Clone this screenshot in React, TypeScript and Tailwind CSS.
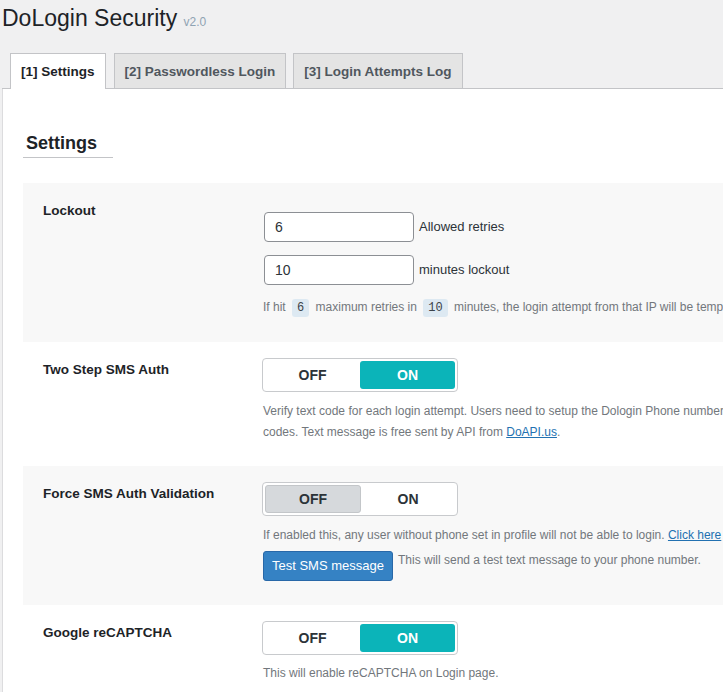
import React from "react";

const FONT = { fontFamily: '"Liberation Sans", Arial, sans-serif' };

function Toggle({ on }: { on: boolean }) {
  return (
    <div className="flex h-[34px] w-[196px] rounded-[4px] border border-[#c8cacd] bg-white p-[2px]">
      <div
        className={
          "flex flex-1 items-center justify-center rounded-[3px] text-[14px] font-semibold text-[#2c3338] " +
          (on ? "" : "border border-[#c3c6c9] bg-[#d6d9dc]")
        }
      >
        OFF
      </div>
      <div
        className={
          "flex flex-1 items-center justify-center rounded-[3px] text-[14px] font-semibold " +
          (on ? "bg-[#0bb4b9] text-white" : "text-[#2c3338]")
        }
      >
        ON
      </div>
    </div>
  );
}

function Code({ children }: { children: React.ReactNode }) {
  return (
    <code className="mx-[3px] rounded-[3px] bg-[#dde9f2] px-[5px] py-[2px] font-['Liberation_Mono',monospace] text-[12px] text-[#3c434a]">
      {children}
    </code>
  );
}

function Row({
  label,
  shaded,
  top,
  bottom,
  children,
}: {
  label: string;
  shaded?: boolean;
  top: string;
  bottom: string;
  children: React.ReactNode;
}) {
  return (
    <div className={"flex pl-[20px] " + (shaded ? "bg-[#f8f8f8]" : "bg-white") + " " + bottom}>
      <div className="w-[219px] shrink-0 pt-[18px] text-[13.5px] font-semibold leading-[20px] text-[#1d2327]">
        {label}
      </div>
      <div className={"flex flex-col " + top}>{children}</div>
    </div>
  );
}

export default function App() {
  return (
    <div className="h-[692px] w-[723px] overflow-hidden bg-[#f0f0f1] pl-[2px]" style={FONT}>
      <h1 className="pt-[2px] text-[23px] leading-[32px] text-[#1d2327]">
        DoLogin Security <span className="text-[12px] text-[#8fa3b3]">v2.0</span>
      </h1>

      <div className="mt-[15px] flex items-end border-b border-[#c3c4c7] pl-[8px]">
        <div className="-mb-px h-[36px] border border-b-0 border-[#c3c4c7] bg-white px-[10px] pt-[8px] text-[13.5px] font-semibold text-[#1d2327]">
          [1] Settings
        </div>
        <div className="ml-[8px] h-[35px] border border-b-0 border-[#c3c4c7] bg-[#e4e4e4] px-[10px] pt-[8px] text-[13.5px] font-semibold text-[#50575e]">
          [2] Passwordless Login
        </div>
        <div className="ml-[7px] h-[35px] border border-b-0 border-[#c3c4c7] bg-[#e4e4e4] px-[10px] pt-[8px] text-[13.5px] font-semibold text-[#50575e]">
          [3] Login Attempts Log
        </div>
      </div>

      <div className="w-[900px] border-l border-[#dcdcde] bg-white pl-[20px] pt-[42px]">
        <h2 className="w-[90px] border-b border-[#c3c4c7] pb-[2px] pl-[3px] text-[18px] font-semibold leading-[24px] text-[#1d2327]">
          Settings
        </h2>

        <div className="mt-[25px] whitespace-nowrap text-[12px] text-[#72777c]">
          <Row label="Lockout" shaded top="pt-[29px]" bottom="pb-[23px]">
            <div className="flex items-center">
              <input
                readOnly
                value="6"
                className="ml-[2px] h-[30px] w-[150px] rounded-[4px] border border-[#8c8f94] bg-white px-[10px] text-[14px] text-[#2c3338]"
                style={FONT}
              />
              <span className="ml-[5px] text-[13px] text-[#2c3338]">Allowed retries</span>
            </div>
            <div className="mt-[13px] flex items-center">
              <input
                readOnly
                value="10"
                className="ml-[2px] h-[30px] w-[150px] rounded-[4px] border border-[#8c8f94] bg-white px-[10px] text-[14px] text-[#2c3338]"
                style={FONT}
              />
              <span className="ml-[5px] text-[13px] text-[#2c3338]">minutes lockout</span>
            </div>
            <p className="mt-[12px] pl-px leading-[21px]">
              If hit <Code>6</Code> maximum retries in <Code>10</Code> minutes, the login attempt from that IP
              will be temporarily disabled.
            </p>
          </Row>

          <Row label="Two Step SMS Auth" top="pt-[16px]" bottom="pb-[23px]">
            <Toggle on />
            <p className="mt-[9px] pl-px leading-[21px]">
              Verify text code for each login attempt. Users need to setup the Dologin Phone number in their
              profile to receive
              <br />
              codes. Text message is free sent by API from{" "}
              <a className="text-[#2271b1] underline">DoAPI.us</a>.
            </p>
          </Row>

          <Row label="Force SMS Auth Validation" shaded top="pt-[16px]" bottom="pb-[24px]">
            <Toggle on={false} />
            <p className="mt-[9px] pl-px leading-[21px]">
              If enabled this, any user without phone set in profile will not be able to login.{" "}
              <a className="text-[#2271b1] underline">Click here</a> to set your phone number.
            </p>
            <div className="mt-[5px] flex items-start">
              <button
                className="ml-px h-[30px] w-[130px] rounded-[3px] border border-[#2868a8] bg-[#3582c4] text-[13px] text-white"
                style={FONT}
              >
                Test SMS message
              </button>
              <span className="ml-[5px] leading-[18px]">This will send a test text message to your phone number.</span>
            </div>
          </Row>

          <Row label="Google reCAPTCHA" top="pt-[16px]" bottom="pb-[23px]">
            <Toggle on />
            <p className="mt-[8px] pl-px leading-[21px]">This will enable reCAPTCHA on Login page.</p>
          </Row>
        </div>
      </div>
    </div>
  );
}
